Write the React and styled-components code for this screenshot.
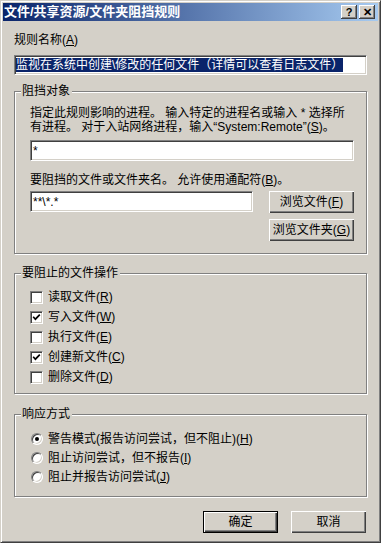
import React from 'react';
import styled, { createGlobalStyle } from 'styled-components';

const GlobalStyle = createGlobalStyle`
	html, body {
		margin: 0;
		padding: 0;
		background: #d4d0c8;
	}
	body {
		font-family: "Liberation Sans", "Noto Sans CJK SC", sans-serif;
		font-size: 12px;
		color: #000;
	}
`;

const Window = styled.div`
	width: 381px;
	height: 543px;
	box-sizing: border-box;
	background: #d4d0c8;
	border: 1px solid;
	border-color: #d4d0c8 #404040 #404040 #d4d0c8;
	box-shadow: inset 1px 1px 0 #fff, inset -1px -1px 0 #808080;
	padding: 2px;
	display: flex;
	flex-direction: column;
`;

const TitleBar = styled.div`
	height: 18px;
	flex-shrink: 0;
	display: flex;
	align-items: center;
	padding: 0 3px 0 1px;
	background: linear-gradient(to right, #0a246a, #a6caf0);
`;

const TitleText = styled.div`
	flex: 1;
	color: #fff;
	font-weight: bold;
	font-size: 13px;
	line-height: 18px;
	white-space: nowrap;
`;

const TitleButton = styled.div`
	width: 16px;
	height: 14px;
	box-sizing: border-box;
	margin-left: ${p => p.$gap || 0}px;
	background: #d4d0c8;
	box-shadow: inset -1px -1px 0 #404040, inset 1px 1px 0 #fff, inset -2px -2px 0 #808080;
	display: flex;
	align-items: center;
	justify-content: center;
	font-family: "Liberation Sans", sans-serif;
	font-weight: bold;
	font-size: 11px;
	line-height: 1;
`;

const Content = styled.div`
	padding: 12px 11px 0;
	display: flex;
	flex-direction: column;
`;

const Label = styled.div`
	line-height: 14px;
	white-space: nowrap;
	margin-top: ${p => p.$top || 0}px;
`;

const Key = styled.span`
	text-decoration: underline;
`;

const TextBox = styled.div`
	box-sizing: border-box;
	height: ${p => p.$h || 21}px;
	width: ${p => (p.$w ? p.$w + 'px' : 'auto')};
	margin-top: ${p => p.$top || 0}px;
	background: #fff;
	border: 1px solid;
	border-color: #808080 #fff #fff #808080;
	box-shadow: inset 1px 1px 0 #404040, inset -1px -1px 0 #d4d0c8;
	padding: 0 ${p => p.$pad || 2}px;
	display: flex;
	align-items: center;
	white-space: nowrap;
	overflow: hidden;
	line-height: 14px;
`;

const Selected = styled.span`
	background: #0a246a;
	color: #fff;
`;

const Group = styled.fieldset`
	margin: ${p => p.$top || 0}px 0 0;
	padding: ${p => p.$pt}px 12px ${p => p.$pb}px 6px;
	border: 1px solid #808080;
	box-shadow: inset 1px 1px 0 #fff, 1px 1px 0 #fff;
	min-inline-size: 0;
`;

const Legend = styled.legend`
	margin: 0;
	padding: 0 2px 0 1px;
	line-height: 14px;
	background: #d4d0c8;
`;

const GroupBody = styled.div`
	padding-left: 9px;
	display: flex;
	flex-direction: column;
`;

const InputRow = styled.div`
	display: flex;
	justify-content: space-between;
	align-items: flex-start;
	margin-top: 4px;
`;

const ButtonColumn = styled.div`
	display: flex;
	flex-direction: column;
	gap: 6px;
`;

const Button = styled.button`
	width: ${p => p.$w || 75}px;
	height: 22px;
	box-sizing: border-box;
	padding: 0;
	font: inherit;
	color: #000;
	background: #d4d0c8;
	border: ${p => (p.$default ? '1px solid #000' : 'none')};
	box-shadow: inset 1px 1px 0 #fff, inset -1px -1px 0 #404040, inset -2px -2px 0 #808080;
	line-height: 14px;
	white-space: nowrap;
`;

const Option = styled.label`
	display: flex;
	align-items: center;
	height: ${p => p.$h}px;
	line-height: 14px;
	white-space: nowrap;
`;

const CheckBox = styled.span`
	width: 13px;
	height: 13px;
	box-sizing: border-box;
	flex-shrink: 0;
	margin-right: 5px;
	background: #fff;
	border: 1px solid;
	border-color: #808080 #fff #fff #808080;
	box-shadow: inset 1px 1px 0 #404040, inset -1px -1px 0 #d4d0c8;
	display: flex;
	align-items: center;
	justify-content: center;
`;

const Radio = styled.span`
	width: 12px;
	height: 12px;
	box-sizing: border-box;
	flex-shrink: 0;
	margin: 0 5px 0 1px;
	border-radius: 50%;
	background: #fff;
	border: 1px solid;
	border-color: #808080 #fff #fff #808080;
	box-shadow: inset 1px 1px 0 #404040, inset -1px -1px 0 #d4d0c8;
	display: flex;
	align-items: center;
	justify-content: center;

	&::after {
		content: "";
		width: 4px;
		height: 4px;
		border-radius: 50%;
		background: ${p => (p.$on ? '#000' : 'transparent')};
	}
`;

const Footer = styled.div`
	display: flex;
	justify-content: flex-end;
	gap: 13px;
	margin: 14px 1px 0 0;
`;

const Check = ({ on }) => (
	<CheckBox>
		{on && (
			<svg width="9" height="9" viewBox="0 0 9 9">
				<polyline points="1.2,3.8 3.4,6.2 7.8,1.6" fill="none" stroke="#000" strokeWidth="1.7" />
			</svg>
		)}
	</CheckBox>
);

const operations = [
	{ text: '读取文件', key: 'R', on: false },
	{ text: '写入文件', key: 'W', on: true },
	{ text: '执行文件', key: 'E', on: false },
	{ text: '创建新文件', key: 'C', on: true },
	{ text: '删除文件', key: 'D', on: false },
];

const responses = [
	{ text: '警告模式(报告访问尝试，但不阻止)', key: 'H', on: true },
	{ text: '阻止访问尝试，但不报告', key: 'I', on: false },
	{ text: '阻止并报告访问尝试', key: 'J', on: false },
];

const App = () => {
	return (
		<>
			<GlobalStyle />
			<Window>
				<TitleBar>
					<TitleText>文件/共享资源/文件夹阻挡规则</TitleText>
					<TitleButton>?</TitleButton>
					<TitleButton $gap={2}>✕</TitleButton>
				</TitleBar>
				<Content>
					<Label>规则名称(<Key>A</Key>)</Label>
					<TextBox $h={20} $pad={1} $top={8}>
						<Selected>监视在系统中创建\修改的任何文件（详情可以查看日志文件）</Selected>
					</TextBox>

					<Group $top={9} $pt={8} $pb={12}>
						<Legend>阻挡对象</Legend>
						<GroupBody>
							<Label>
								指定此规则影响的进程。 输入特定的进程名或输入 * 选择所<br />
								有进程。 对于入站网络进程，输入“System:Remote”(<Key>S</Key>)。
							</Label>
							<TextBox $top={6}>*</TextBox>
							<Label $top={12}>要阻挡的文件或文件夹名。 允许使用通配符(<Key>B</Key>)。</Label>
							<InputRow>
								<TextBox $w={223}>**\*.*</TextBox>
								<ButtonColumn>
									<Button $w={85}>浏览文件(<Key>F</Key>)</Button>
									<Button $w={85}>浏览文件夹(<Key>G</Key>)</Button>
								</ButtonColumn>
							</InputRow>
						</GroupBody>
					</Group>

					<Group $top={12} $pt={7} $pb={6}>
						<Legend>要阻止的文件操作</Legend>
						<GroupBody>
							{operations.map(op => (
								<Option key={op.key} $h={20}>
									<Check on={op.on} />
									{op.text}(<Key>{op.key}</Key>)
								</Option>
							))}
						</GroupBody>
					</Group>

					<Group $top={13} $pt={8} $pb={10}>
						<Legend>响应方式</Legend>
						<GroupBody>
							{responses.map(r => (
								<Option key={r.key} $h={19}>
									<Radio $on={r.on} />
									{r.text}(<Key>{r.key}</Key>)
								</Option>
							))}
						</GroupBody>
					</Group>

					<Footer>
						<Button $default>确定</Button>
						<Button>取消</Button>
					</Footer>
				</Content>
			</Window>
		</>
	);
};

export default App;
